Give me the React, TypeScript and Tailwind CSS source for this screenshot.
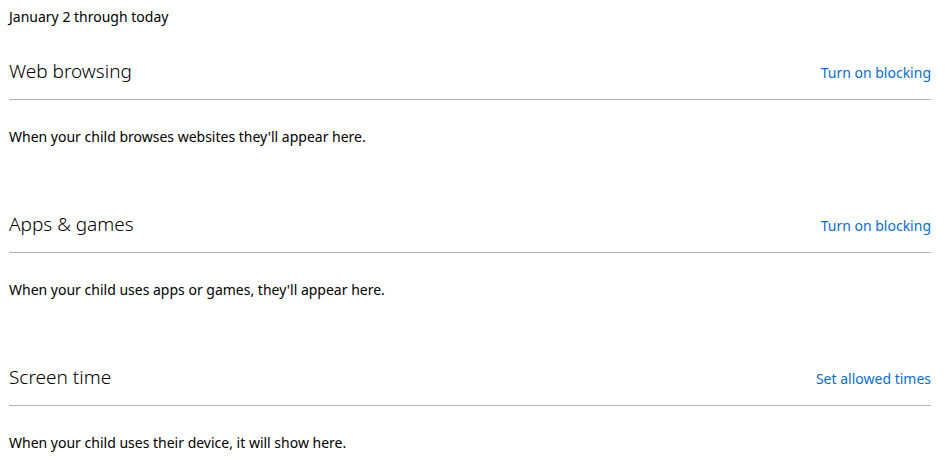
import React from "react";

const sections = [
  {
    title: "Web browsing",
    action: "Turn on blocking",
    body: "When your child browses websites they'll appear here.",
  },
  {
    title: "Apps & games",
    action: "Turn on blocking",
    body: "When your child uses apps or games, they'll appear here.",
  },
  {
    title: "Screen time",
    action: "Set allowed times",
    body: "When your child uses their device, it will show here.",
  },
];

export default function App() {
  return (
    <div
      className="w-[949px] h-[462px] overflow-hidden bg-white text-black"
      style={{ fontFamily: '"Noto Sans", "Open Sans", sans-serif' }}
    >
      <div className="w-[922px] pl-[9px] box-content">
        {/* Date range */}
        <div className="h-[27px] pt-[7px] text-[14px] leading-5">January 2 through today</div>

        {sections.map((s) => (
          <section key={s.title} className="pt-[30px] pb-[33px]">
            <div className="flex items-baseline justify-between pb-[14px] border-b border-[#b4b4b4]">
              <h2 className="text-[19px] leading-[28px] font-light">{s.title}</h2>
              <a href="#" className="text-[14px] leading-5 text-[#0a6ccf]">
                {s.action}
              </a>
            </div>
            <p className="mt-[27px] text-[14px] leading-5">{s.body}</p>
          </section>
        ))}
      </div>
    </div>
  );
}
